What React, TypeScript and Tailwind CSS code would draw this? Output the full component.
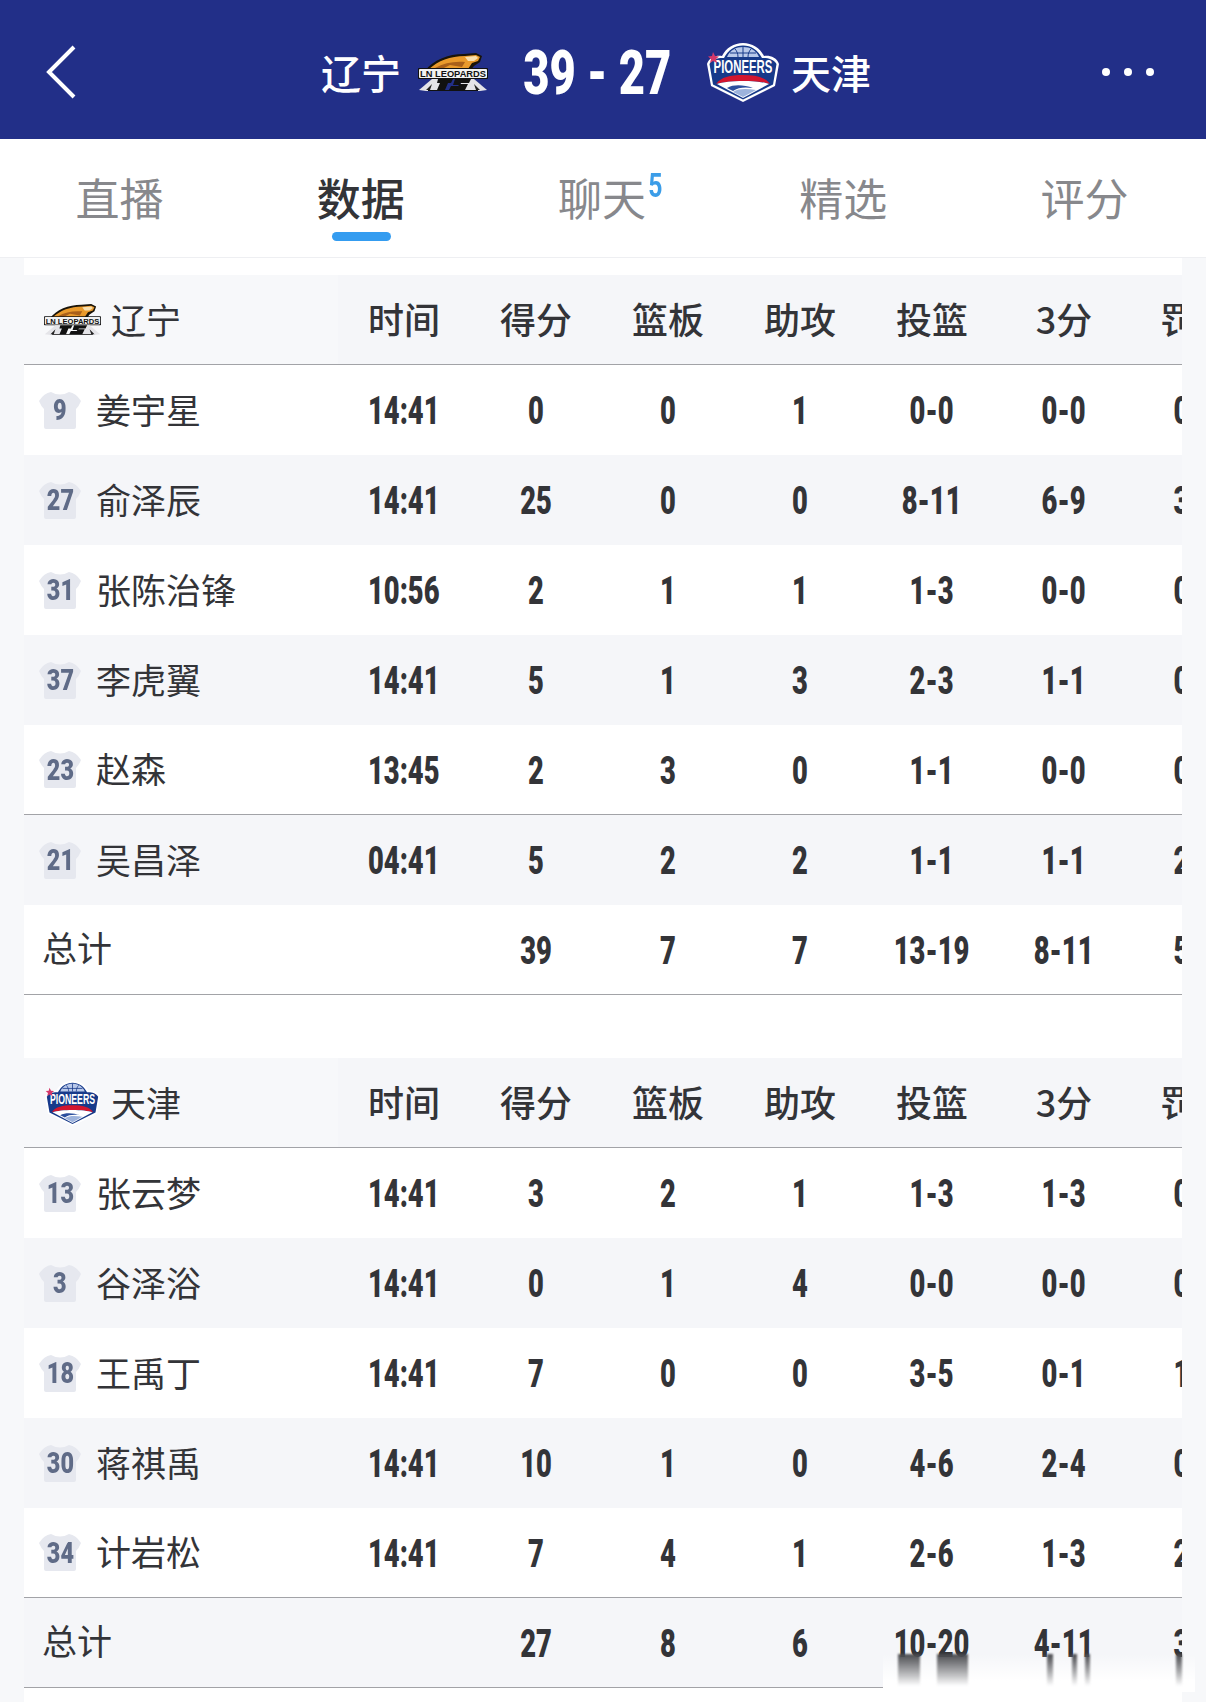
import React from "react";

type Player = {
  no: string;
  name: string;
  time: string;
  stats: string[];
  shaded?: boolean;
  line?: boolean;
};

type TeamTable = {
  name: string;
  logo: React.ReactNode;
  players: Player[];
  total: string[];
  totalShaded?: boolean;
};

const cjk = "font-['Noto_Sans_CJK_SC','Noto_Sans',sans-serif]";
const din = "font-['Roboto','Liberation_Sans',sans-serif]";

const LeopardLogo = ({ className }: { className?: string }) => (
  <svg viewBox="0 0 70 38" className={className}>
    <path d="M7 18 C15 7 30 1 46 1 L58 0 L64 3 L62 9 L56 13 L52 18 Z" fill="#1a1408" />
    <path d="M11 16 C20 8 32 3 47 3 L58 2 L62 4 L60 8 L54 10 L50 16 Z" fill="#e99a2c" />
    <path d="M17 15 C26 10 36 8 47 9 L44 14 L32 12 L24 16 Z" fill="#a9601a" />
    <path d="M47 4 L58 3 L60 5 L56 8 L50 8 Z" fill="#f8dfae" />
    <rect x="0" y="15" width="70" height="11" rx="1" fill="#111" />
    <rect x="1" y="16" width="68" height="9" rx="1" fill="#f2f2f2" />
    <text x="35" y="24" textAnchor="middle" fontSize="9.5" fontWeight="700" fill="#111" fontFamily="Liberation Sans" textLength="66" lengthAdjust="spacingAndGlyphs">
      LN LEOPARDS
    </text>
    <path d="M1 37 L14 26 L28 26 L26 38 L8 38 Z" fill="#e4e4e8" />
    <path d="M69 37 L56 26 L42 26 L44 38 L62 38 Z" fill="#e4e4e8" />
    <path d="M8 37 L14 31 L12 37 Z M62 37 L56 31 L58 37 Z" fill="#222" />
    <path d="M20 26 H35 L33 30 H30 L27 37 H19 L22 30 H19 Z" fill="#111" />
    <path d="M37 26 H53 L51 30 H43 L42 31 H50 L47 37 H31 L33 33 H40 L41 32 H35 Z" fill="#111" />
    <path d="M10 37.5 H60" stroke="#111" strokeWidth="1" />
  </svg>
);

const PioneersLogo = ({ className }: { className?: string }) => (
  <svg viewBox="0 0 74 60" className={className}>
    <path d="M37 60 L5 44 L1 22 C3 15 11 13 16 14 C20 6 28 1 37 1 C46 1 54 6 58 14 C63 13 71 15 73 22 L69 44 Z" fill="#fff" />
    <path d="M37 57.5 L7 42.5 L3.5 22 C6 17 13 15.5 18 16 C22 8 29 3.5 37 3.5 C45 3.5 52 8 56 16 C61 15.5 68 17 70.5 22 L67 42.5 Z" fill="#173a8a" />
    <path d="M21 15 C24 8 30 5 37 5 C44 5 50 8 53 15 Z" fill="#b9c9ea" />
    <path d="M37 5 V15 M29 7 C31 9 32 12 32 15 M45 7 C43 9 42 12 42 15 M24 11 H50" stroke="#173a8a" strokeWidth="1" fill="none" />
    <text transform="translate(37 31) scale(0.6 1)" textAnchor="middle" fontSize="19" fontWeight="700" fill="#fff" fontFamily="Liberation Sans">
      PIONEERS
    </text>
    <path d="M10 42 C15 35 24 33 37 33 C50 33 59 35 64 42 C52 38 22 38 10 42 Z" fill="#d3162f" />
    <path d="M11 42 C22 38 52 38 63 42 L37 56 Z" fill="#fff" />
    <path d="M21 46 C28 42 38 43 47 46 C40 45 32 45 27 49 Z" fill="#2b4f9e" />
    <path d="M27 50 C33 46 42 47 50 48 L37 55 Z" fill="#9db3dc" />
    <path d="M7 10 L9 14 L13 14.5 L10 17 L11 21 L7 19 L4 21 L5 17 L2 14.5 L6 14 Z" fill="#d4386a" />
  </svg>
);

const Jersey = ({ no }: { no: string }) => (
  <div className="relative h-[39px] w-[42px] shrink-0">
    <svg viewBox="0 0 42 39" className="h-full w-full">
      <path
        d="M12 1 Q21 6 30 1 Q37 2 42 10 Q40 15 37 18 L37 36 Q37 38 35 38 L7 38 Q5 38 5 36 L5 18 Q2 15 0 10 Q5 2 12 1 Z"
        fill="#e6e8ef"
      />
    </svg>
    <div className="absolute inset-0 flex items-center justify-center">
      <span className={`${din} inline-block scale-x-[0.78] text-[30px] leading-none font-black text-[#5f6b87]`}>{no}</span>
    </div>
  </div>
);

const Num = ({ children }: { children: React.ReactNode }) => (
  <span className={`${din} inline-block translate-y-px scale-x-[0.72] text-[38px] leading-none font-black whitespace-nowrap text-[#333438]`}>
    {children}
  </span>
);

const Cell = ({ children }: { children?: React.ReactNode }) => (
  <div className="flex w-[132px] shrink-0 items-center justify-center">{children}</div>
);

const liaoning: TeamTable = {
  name: "辽宁",
  logo: <LeopardLogo className="h-[31px] w-[57px]" />,
  players: [
    { no: "9", name: "姜宇星", time: "14:41", stats: ["0", "0", "1", "0-0", "0-0", "0-0"] },
    { no: "27", name: "俞泽辰", time: "14:41", stats: ["25", "0", "0", "8-11", "6-9", "3-3"], shaded: true },
    { no: "31", name: "张陈治锋", time: "10:56", stats: ["2", "1", "1", "1-3", "0-0", "0-0"] },
    { no: "37", name: "李虎翼", time: "14:41", stats: ["5", "1", "3", "2-3", "1-1", "0-0"], shaded: true },
    { no: "23", name: "赵森", time: "13:45", stats: ["2", "3", "0", "1-1", "0-0", "0-0"], line: true },
    { no: "21", name: "吴昌泽", time: "04:41", stats: ["5", "2", "2", "1-1", "1-1", "2-2"], shaded: true },
  ],
  total: ["39", "7", "7", "13-19", "8-11", "5-5"],
};

const tianjin: TeamTable = {
  name: "天津",
  logo: <PioneersLogo className="h-[46px] w-[57px]" />,
  players: [
    { no: "13", name: "张云梦", time: "14:41", stats: ["3", "2", "1", "1-3", "1-3", "0-0"] },
    { no: "3", name: "谷泽浴", time: "14:41", stats: ["0", "1", "4", "0-0", "0-0", "0-0"], shaded: true },
    { no: "18", name: "王禹丁", time: "14:41", stats: ["7", "0", "0", "3-5", "0-1", "1-1"] },
    { no: "30", name: "蒋祺禹", time: "14:41", stats: ["10", "1", "0", "4-6", "2-4", "0-0"], shaded: true },
    { no: "34", name: "计岩松", time: "14:41", stats: ["7", "4", "1", "2-6", "1-3", "2-2"], line: true },
  ],
  total: ["27", "8", "6", "10-20", "4-11", "3-3"],
  totalShaded: true,
};

const columns = ["时间", "得分", "篮板", "助攻", "投篮", "3分", "罚球"];

const StatTable = ({ team }: { team: TeamTable }) => (
  <div className="w-full">
    <div className="flex h-[90px] border-b border-[#a2a3a7] bg-[#f5f6f9]">
      <div className="flex w-[314px] shrink-0 items-center bg-[#f7f8fa] pl-[20px]">
        {team.logo}
        <span className={`${cjk} ml-[10px] text-[35px] text-[#333438]`}>{team.name}</span>
      </div>
      {columns.map((c) => (
        <Cell key={c}>
          <span className={`${cjk} -translate-y-[2px] text-[36px] font-medium whitespace-nowrap text-[#333438]`}>{c}</span>
        </Cell>
      ))}
    </div>
    {team.players.map((p) => (
      <div
        key={p.no}
        className={`flex h-[90px] items-center ${p.shaded ? "bg-[#f5f6f9]" : "bg-white"} ${p.line ? "border-b border-[#a2a3a7]" : ""}`}
      >
        <div className="flex w-[314px] shrink-0 items-center pl-[15px]">
          <Jersey no={p.no} />
          <span className={`${cjk} ml-[15px] -translate-y-px text-[35px] text-[#333438]`}>{p.name}</span>
        </div>
        <Cell>
          <Num>{p.time}</Num>
        </Cell>
        {p.stats.map((s, i) => (
          <Cell key={i}>
            <Num>{s}</Num>
          </Cell>
        ))}
      </div>
    ))}
    <div className={`flex h-[90px] items-center border-b border-[#a2a3a7] ${team.totalShaded ? "bg-[#f5f6f9]" : "bg-white"}`}>
      <div className="flex w-[314px] shrink-0 items-center pl-[18px]">
        <span className={`${cjk} -translate-y-[2px] text-[35px] text-[#333438]`}>总计</span>
      </div>
      <Cell />
      {team.total.map((s, i) => (
        <Cell key={i}>
          <Num>{s}</Num>
        </Cell>
      ))}
    </div>
  </div>
);

const tabs = ["直播", "数据", "聊天", "精选", "评分"];

export default function App() {
  return (
    <div className="relative h-[1702px] w-[1206px] overflow-hidden bg-[#f7f8fa]">
      {/* score bar */}
      <div className="flex h-[139px] items-center bg-[#222f88] pt-[4px] pl-[46px] text-white">
        <svg viewBox="0 0 30 54" className="h-[54px] w-[30px] shrink-0">
          <path d="M28 2 L3 27 L28 52" fill="none" stroke="#fff" strokeWidth="4" />
        </svg>
        <span className={`${cjk} ml-[245px] text-[40px] font-medium`}>辽宁</span>
        <LeopardLogo className="ml-[17px] h-[38px] w-[70px]" />
        <div className="ml-[36px] flex w-[146px] justify-center">
          <span className={`${din} inline-block translate-y-px scale-x-[0.73] text-[62px] leading-none font-black whitespace-nowrap`}>39 - 27</span>
        </div>
        <PioneersLogo className="ml-[36px] h-[60px] w-[74px]" />
        <span className={`${cjk} ml-[11px] text-[40px] font-medium`}>天津</span>
        <div className="ml-auto mr-[52px] flex gap-[14px]">
          <span className="size-[8px] rounded-full bg-white" />
          <span className="size-[8px] rounded-full bg-white" />
          <span className="size-[8px] rounded-full bg-white" />
        </div>
      </div>

      {/* tabs */}
      <div className="grid h-[119px] grid-cols-5 border-b border-[#eeeff2] bg-white">
        {tabs.map((t, i) => (
          <div key={t} className="relative flex items-center justify-center pb-[2px]">
            <span className={`${cjk} relative -translate-x-px text-[44px] ${i === 1 ? "font-medium text-[#333438]" : "text-[#87888c]"}`}>
              {t}
              {i === 2 && (
                <span className={`${din} absolute top-[5px] left-full text-[33px] leading-none font-bold text-[#3b9de8]`}>
                  <span className="inline-block scale-x-[0.75]">5</span>
                </span>
              )}
            </span>
            {i === 1 && <span className="absolute top-[93px] h-[9px] w-[59px] rounded-full bg-[#349cf0]" />}
          </div>
        ))}
      </div>

      {/* tables */}
      <div className="mx-[24px] overflow-hidden bg-white pt-[17px]">
        <StatTable team={liaoning} />
        <div className="h-[63px]" />
        <StatTable team={tianjin} />
        <div className="h-[20px]" />
      </div>

      {/* watermark smear over the bottom right corner */}
      <div className="absolute top-[1654px] left-[883px] h-[38px] w-[312px] bg-gradient-to-b from-white/0 to-white to-70%">
        <div className="absolute top-0 left-[15px] h-[32px] w-[22px] bg-gradient-to-b from-[#4a4b4f] to-white/0 blur-[1px]" />
        <div className="absolute top-0 left-[54px] h-[32px] w-[31px] bg-gradient-to-b from-[#4a4b4f] to-white/0 blur-[1px]" />
        <div className="absolute top-0 left-[164px] h-[32px] w-[6px] bg-gradient-to-b from-[#4a4b4f] to-white/0 blur-[1px]" />
        <div className="absolute top-0 left-[189px] h-[32px] w-[5px] bg-gradient-to-b from-[#4a4b4f] to-white/0 blur-[1px]" />
        <div className="absolute top-0 left-[202px] h-[32px] w-[5px] bg-gradient-to-b from-[#4a4b4f] to-white/0 blur-[1px]" />
        <div className="absolute top-0 left-[293px] h-[32px] w-[6px] bg-gradient-to-b from-[#4a4b4f] to-white/0 blur-[1px]" />
      </div>
    </div>
  );
}
